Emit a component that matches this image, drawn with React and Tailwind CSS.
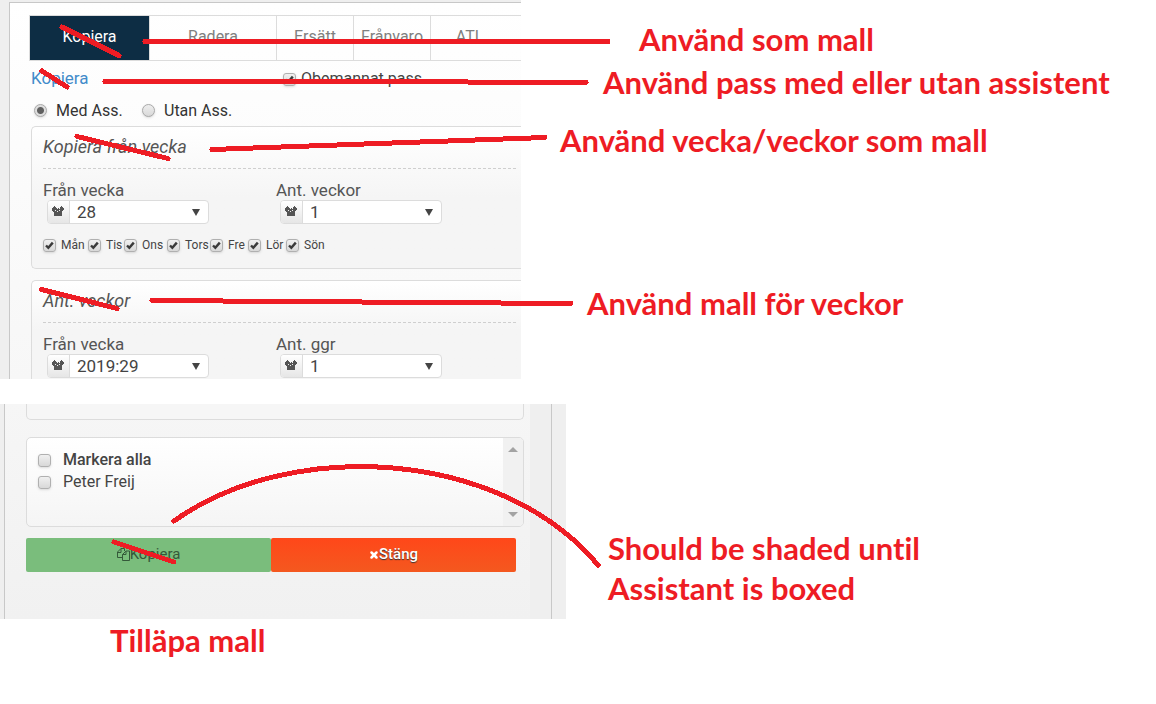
import { LuX } from "react-icons/lu";

function Check({ id, checked }) {
  return (
    <span className="grid h-[13px] w-[13px] shrink-0">
      <input
        id={id}
        type="checkbox"
        defaultChecked={checked}
        className="peer col-start-1 row-start-1 m-0 h-[13px] w-[13px] appearance-none rounded-[3px] border border-[#b0b0b0] bg-gradient-to-b from-[#f0f0f0] to-[#d8d8d8] shadow-sm"
      />
      <svg viewBox="0 0 13 13" className="pointer-events-none invisible col-start-1 row-start-1 h-[13px] w-[13px] peer-checked:visible">
        <path d="M3 6.5L5.3 8.7L9.8 3.6" fill="none" stroke="#3a3a3a" strokeWidth="2.4" />
      </svg>
    </span>
  );
}

function Radio({ id, checked }) {
  return (
    <input
      id={id}
      type="radio"
      name="ass"
      defaultChecked={checked}
      className="m-0 h-[13px] w-[13px] shrink-0 appearance-none rounded-full border border-[#ababab] bg-[#e4e4e4] bg-gradient-to-b from-[#eeeeee] to-[#d9d9d9] shadow-sm checked:bg-[radial-gradient(circle,#606060_0_3px,#dedede_4px)]"
    />
  );
}

function WeekIcon() {
  return (
    <svg viewBox="0 0 12 11" className="h-[11px] w-3" fill="#555" shapeRendering="crispEdges">
      <path d="M2 0h1v1h1v1h1v1h1V2h1v1h1V1h1V0h1v1h1v1h1v2h-1v1h-1v5H2V6H1V5H0V2h1V1h1z" />
      <path d="M3 4h1v1H3zM7 4h1v1H7zM5 5h1v1H5z" fill="#eee" />
    </svg>
  );
}

function WeekSelect({ id, label, value }) {
  return (
    <div className="w-[233px] shrink-0">
      <label htmlFor={id} className="block text-[17px] leading-5 text-[#555]">{label}</label>
      <div className="ml-1 flex h-6 w-[162px] overflow-hidden rounded-[4px] border border-[#dcdcdc] bg-white">
        <span className="flex w-[22px] items-center justify-center border-r border-[#dcdcdc] bg-gradient-to-b from-white to-[#e6e6e6] pb-[2px] pr-[2px]">
          <WeekIcon />
        </span>
        <span className="grid flex-1 items-center">
          <select id={id} className="col-start-1 row-start-1 h-full w-full appearance-none bg-transparent pb-px pl-[7px] text-[17px] leading-5 text-[#444]">
            <option>{value}</option>
          </select>
          <svg viewBox="0 0 8 7" className="pointer-events-none col-start-1 row-start-1 mr-2 h-[7px] w-2 justify-self-end">
            <path d="M0 0h8L4 7z" fill="#444" />
          </svg>
        </span>
      </div>
    </div>
  );
}

function Group({ title, children, className }) {
  return (
    <fieldset className={`min-w-0 rounded-tl-[5px] border-l border-t border-[#dcdcdc] bg-gradient-to-b from-white to-[#f5f5f5] to-50% pl-[11px] ${className}`}>
      <h2 className="mr-[5px] border-b border-dashed border-[#cfcfcf] pb-[11px] pt-[10px] text-[18px] italic leading-5 text-[#555]">{title}</h2>
      {children}
    </fieldset>
  );
}

const days = [
  ["Mån", "w-[45px]"],
  ["Tis", "w-9"],
  ["Ons", "w-[43px]"],
  ["Tors", "w-[43px]"],
  ["Fre", "w-[38px]"],
  ["Lör", "w-[38px]"],
  ["Sön", "w-[45px]"],
];

const tabs = [
  ["Kopiera", "w-[120px] bg-[#0d2d44] text-white"],
  ["Radera", "w-[127px] text-[#808080]"],
  ["Ersätt", "w-[77px] text-[#808080]"],
  ["Frånvaro", "w-[77px] text-[#808080]"],
  ["ATL", "w-[77px] text-[#808080]"],
];

function CopyForm() {
  return (
    <section className="w-[521px] bg-[#efefef] pl-[9px] pt-[2px]">
      <div className="border-l border-t border-[#c8c8c8] bg-gradient-to-b from-white to-[#f7f7f7] pl-[19px] pt-3">
        <nav className="flex h-[46px] border-y border-l border-[#dcdcdc]">
          {tabs.map(([name, look]) => (
            <button key={name} className={`border-r border-[#dcdcdc] pb-[2px] text-[16px] last:border-r-0 ${look}`}>{name}</button>
          ))}
        </nav>
        <div className="flex h-[35px] pl-[2px]">
          <a href="#kopiera" className="w-[252px] pt-[7px] text-[17px] leading-5 text-[#428bca]">Kopiera</a>
          <div className="flex h-9 items-center gap-[5px] text-[16px] text-[#444]">
            <Check id="obemannat" checked />
            <label htmlFor="obemannat">Obemannat pass</label>
          </div>
        </div>
        <div className="flex h-[30px] items-center pb-px pl-[5px] text-[16px] text-[#333]">
          <Radio id="med" checked />
          <label htmlFor="med" className="ml-[9px] w-[86px]">Med Ass.</label>
          <Radio id="utan" />
          <label htmlFor="utan" className="ml-[9px]">Utan Ass.</label>
        </div>
        <div className="pl-[2px]">
          <Group title="Kopiera från vecka" className="mb-[11px] rounded-bl-[5px] border-b pb-[15px]">
            <div className="flex pt-[11px]">
              <WeekSelect id="from1" label="Från vecka" value="28" />
              <WeekSelect id="count1" label="Ant. veckor" value="1" />
            </div>
            <div className="mt-[13px] flex h-4 items-center text-[12px] text-[#444]">
              {days.map(([day, width]) => (
                <span key={day} className={`flex shrink-0 items-center gap-[5px] ${width}`}>
                  <Check id={day} checked />
                  <label htmlFor={day}>{day}</label>
                </span>
              ))}
            </div>
          </Group>
          <Group title="Ant. veckor" className="pb-px">
            <div className="flex pt-[11px]">
              <WeekSelect id="from2" label="Från vecka" value="2019:29" />
              <WeekSelect id="count2" label="Ant. ggr" value="1" />
            </div>
          </Group>
        </div>
      </div>
    </section>
  );
}

function AssistantForm() {
  return (
    <section className="mt-[25px] flex w-[566px] bg-[#efefef] pl-1 pr-[14px]">
      <div className="flex-1 border-x border-[#c8c8c8] pr-[21px]">
        <div className="bg-gradient-to-b from-[#f6f6f6] to-[#f1f1f1] pb-[47px] pl-[21px] pr-[6px]">
          <div className="h-4 rounded-b-[5px] border border-t-0 border-[#dcdcdc] bg-[#f6f6f6]" />
          <div className="mt-[17px] flex h-[90px] overflow-hidden rounded-[5px] border border-[#dcdcdc] bg-gradient-to-b from-white to-[#f5f5f5] text-[16px] leading-[22px] text-[#444]">
            <div className="flex-1 pl-[11px] pt-[11px]">
              <div className="flex items-center gap-3">
                <Check id="all" />
                <label htmlFor="all" className="font-medium">Markera alla</label>
              </div>
              <div className="flex items-center gap-3">
                <Check id="peter" />
                <label htmlFor="peter">Peter Freij</label>
              </div>
            </div>
            <div className="flex w-5 flex-col items-center justify-between bg-[#f1f1f1] py-[9px]">
              <svg viewBox="0 0 10 5" className="h-[5px] w-[10px]"><path d="M0 5L5 0l5 5z" fill="#a3a3a3" /></svg>
              <svg viewBox="0 0 10 5" className="h-[5px] w-[10px]"><path d="M0 0l5 5 5-5z" fill="#a3a3a3" /></svg>
            </div>
          </div>
          <div className="mr-2 mt-[11px] flex h-[34px] text-[15px]">
            <button className="flex flex-1 items-center justify-center rounded-[2px] bg-[#7abd7c] pb-px text-[#35593a]">
              <svg viewBox="0 0 13 13" className="h-[13px] w-[13px]" fill="none" stroke="currentColor">
                <path d="M7.5 3V.5H4L.5 4v5.500H5M.5 4.500H4V.5M5.500 6.500L9 3h3.500v9.500h-7zM5.500 6.500H9V3" />
              </svg>
              Kopiera
            </button>
            <button className="flex flex-1 items-center justify-center rounded-[2px] bg-gradient-to-b from-[#ff4719] to-[#f4581f] pb-px font-medium text-white [text-shadow:0_1px_1px_#333]">
              <LuX className="h-[10px] w-[10px]" strokeWidth={6} />
              Stäng
            </button>
          </div>
        </div>
      </div>
    </section>
  );
}

const notes = [
  ["Använd som mall", "left-[639px] top-[19px]"],
  ["Använd pass med eller utan assistent", "left-[603px] top-[62px]"],
  ["Använd vecka/veckor som mall", "left-[560px] top-[120px]"],
  ["Använd mall för veckor", "left-[587px] top-[283px]"],
  ["Should be shaded until", "left-[608px] top-[528px]"],
  ["Assistant is boxed", "left-[608px] top-[568px]"],
  ["Tilläpa mall", "left-[110px] top-[620px]"],
];

function Annotations() {
  return (
    <>
      <svg width="1156" height="704" className="pointer-events-none absolute left-0 top-0" fill="none" stroke="#ee1c24" strokeWidth="5" strokeLinecap="round" strokeLinejoin="round" shapeRendering="crispEdges">
        <path d="M62 27L119 55.5M145 41.5H608M42 71L67 87M105 81.5L345 81.5L586 82.5M77 136.5L168 158.5M212 149.5L545 137.5M41.5 289.5L117 308.5M152 300.5L571 303.5M114 542L174 562" />
        <path d="M174 521C290 438 500 448 598 565" />
      </svg>
      {notes.map(([text, place]) => (
        <p key={text} className={`absolute whitespace-nowrap font-[Lato,sans-serif] text-[31px] font-bold leading-10 text-[#ee1c24] [font-variant-ligatures:none] ${place}`}>{text}</p>
      ))}
    </>
  );
}

export default function App() {
  return (
    <main className="relative min-h-screen bg-white font-[Roboto,sans-serif]">
      <CopyForm />
      <AssistantForm />
      <Annotations />
    </main>
  );
}
